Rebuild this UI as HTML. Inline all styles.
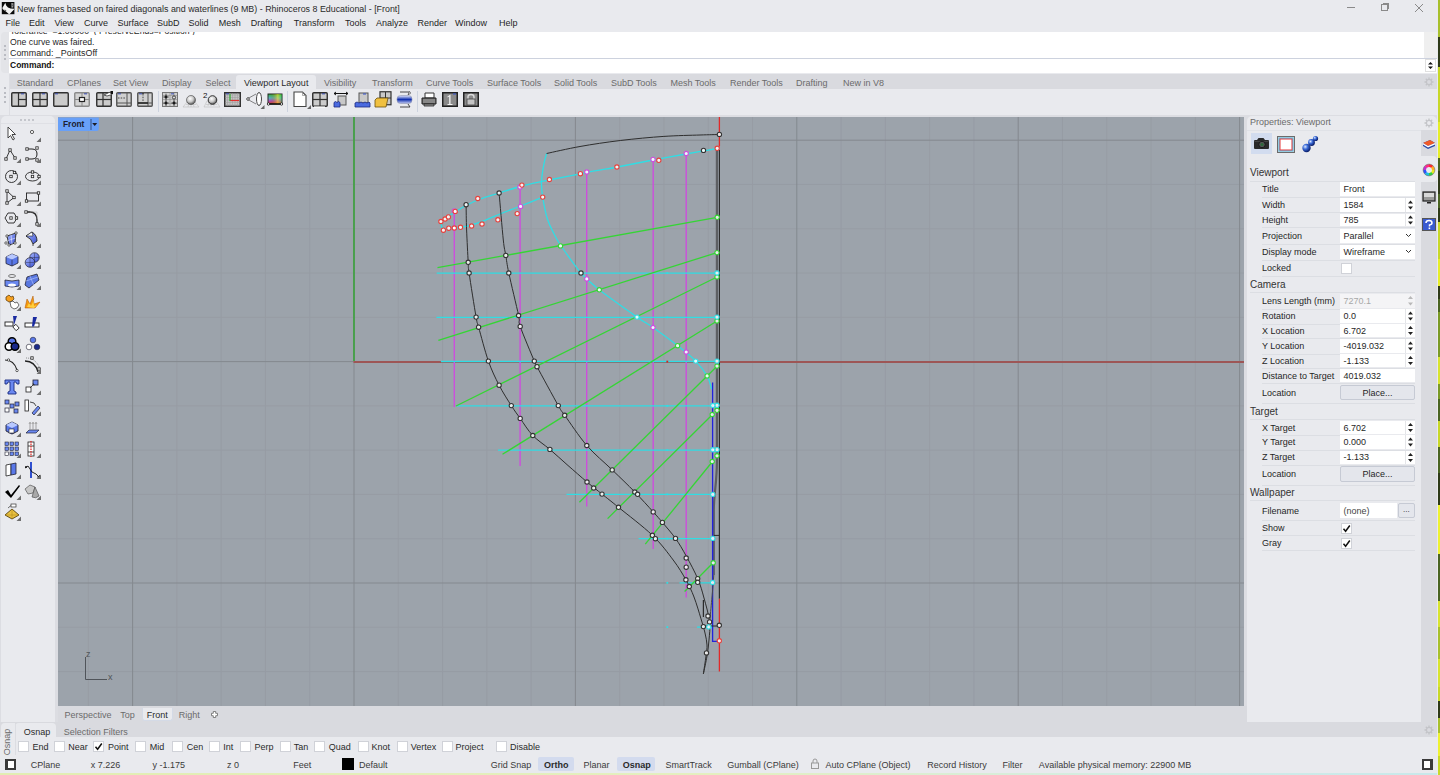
<!DOCTYPE html>
<html><head><meta charset="utf-8">
<style>
*{margin:0;padding:0;box-sizing:border-box}
html,body{width:1440px;height:775px;overflow:hidden;background:#e9eaee;font-family:"Liberation Sans",sans-serif;color:#222}
.a{position:absolute;white-space:nowrap}
.t{font-size:9px;line-height:10px;color:#1f1f1f}
.g{color:#6b6b6b}
svg.a{overflow:visible}
</style></head><body>
<div class="a" style="left:1437.5px;top:0;width:2.5px;height:775px;background:linear-gradient(#a8c02c 0.0%,#a8c02c 4.8%,#2e3a18 4.8%,#2e3a18 8.6%,#c8d828 8.6%,#c8d828 13.0%,#c8d828 13.0%,#c8d828 15.8%,#e6ee2a 15.8%,#e6ee2a 20.4%,#4a6422 20.4%,#4a6422 22.1%,#2e3a18 22.1%,#2e3a18 25.0%,#4a6422 25.0%,#4a6422 26.8%,#2e3a18 26.8%,#2e3a18 28.6%,#c8d828 28.6%,#c8d828 33.4%,#e6ee2a 33.4%,#e6ee2a 36.9%,#2e3a18 36.9%,#2e3a18 38.6%,#4a6422 38.6%,#4a6422 40.2%,#7a9a26 40.2%,#7a9a26 42.7%,#7a9a26 42.7%,#7a9a26 46.1%,#d8e430 46.1%,#d8e430 49.6%,#7a9a26 49.6%,#7a9a26 51.5%,#4a6422 51.5%,#4a6422 54.3%,#c8d828 54.3%,#c8d828 57.7%,#4a6422 57.7%,#4a6422 61.0%,#2e3a18 61.0%,#2e3a18 65.2%,#eef232 65.2%,#eef232 68.7%,#eef232 68.7%,#eef232 71.5%,#4a6422 71.5%,#4a6422 75.8%,#4a6422 75.8%,#4a6422 77.6%,#d8e430 77.6%,#d8e430 80.9%,#a8c02c 80.9%,#a8c02c 85.0%,#d8e430 85.0%,#d8e430 88.6%,#c8d828 88.6%,#c8d828 90.5%,#2e3a18 90.5%,#2e3a18 92.6%,#a8c02c 92.6%,#a8c02c 94.6%,#eef232 94.6%,#eef232 97.6%,#c8d828 97.6%,#c8d828 101.8%)"></div>
<div class="a" style="left:0;top:773px;width:1437px;height:2px;background:linear-gradient(90deg,#e2edb2,#e4efc0 50%,#d2ece6 80%,#c8e8ea)"></div>

<!-- title bar -->
<svg class="a" style="left:1px;top:2px" width="14" height="13" viewBox="0 0 14 13"><rect x="0.8" y="0" width="12.6" height="12.2" fill="#0a0a0a"/><path d="M1.5 5.5L2.5 4L4.3 0.8L5.2 3.5L7 5.5L9.5 6.5L13 6.8L13 7.5L9 11.8L8 12.2L5.5 10L3.5 8.5L1.5 7Z" fill="#f2f2f2"/><path d="M3.5 7.5L5.5 8.2L4.2 9.3Z" fill="#555"/><path d="M10.3 1L12.5 1.2L12.3 5.5L10.5 5.8Z" fill="#9a9a9a"/><path d="M10.8 3.3H12" stroke="#222" stroke-width="0.6"/></svg>
<div class="a t" style="left:17px;top:3.8px;color:#2a2a2a;font-size:8.88px">New frames based on faired diagonals and waterlines (9 MB) - Rhinoceros 8 Educational - [Front]</div>
<div class="a" style="left:1347px;top:7px;width:8px;height:1px;background:#8a8a8a"></div>
<div class="a" style="left:1381px;top:4px;width:7px;height:7px;border:1px solid #8a8a8a"></div>
<div class="a" style="left:1383px;top:3px;width:6px;height:6px;border-top:1px solid #8a8a8a;border-right:1px solid #8a8a8a"></div>
<svg class="a" style="left:1415px;top:4px" width="8" height="8"><path d="M0 0L8 8M8 0L0 8" stroke="#8a8a8a" stroke-width="1"/></svg>

<!-- menu -->
<div class="a t" style="left:0;top:18.1px;color:#1f1f1f">
<span class="a" style="left:5.5px">File</span><span class="a" style="left:29px">Edit</span><span class="a" style="left:54.5px">View</span><span class="a" style="left:84px">Curve</span><span class="a" style="left:117.5px">Surface</span><span class="a" style="left:157px">SubD</span><span class="a" style="left:188.5px">Solid</span><span class="a" style="left:218.75px">Mesh</span><span class="a" style="left:250.75px">Drafting</span><span class="a" style="left:293.75px">Transform</span><span class="a" style="left:345px">Tools</span><span class="a" style="left:376px">Analyze</span><span class="a" style="left:417.5px">Render</span><span class="a" style="left:455px">Window</span><span class="a" style="left:499px">Help</span>
</div>

<!-- command area -->
<div class="a" style="left:1px;top:32px;width:9px;height:41px;background:#e3e4e8;border-radius:4px 0 0 4px"></div>
<div class="a" style="left:4px;top:45px;width:2px;height:16px;background:repeating-linear-gradient(#b9bbc2 0 2px,transparent 2px 4.5px)"></div>
<div class="a" style="left:9px;top:32px;width:1415px;height:41px;background:#fff"></div>
<div class="a" style="left:1424px;top:32px;width:13px;height:26px;background:#efefef"></div>
<div class="a" style="left:1424px;top:58px;width:13px;height:15px;background:#fff"></div>
<div class="a" style="left:9px;top:58px;width:1428px;height:1px;background:#cdd2de"></div>
<div class="a" style="left:9px;top:32px;width:600px;height:3px;overflow:hidden"><div class="a t" style="left:1px;top:-5.9px;white-space:pre;font-size:8.7px">Tolerance  =1.00000  ( PreserveEnds=Position )</div></div>
<div class="a t" style="left:10px;top:36.7px;font-size:8.7px">One curve was faired.</div>
<div class="a t" style="left:10px;top:48px;font-size:8.9px">Command: _PointsOff</div>
<div class="a t" style="left:10px;top:59.8px;font-weight:bold;color:#111;font-size:8.5px">Command:</div>
<svg class="a" style="left:1425px;top:59px" width="11" height="13"><rect x="0.5" y="0.5" width="10" height="12" fill="#fff" stroke="#e0e0e0"/><path d="M3 5.5 L5.5 3 L8 5.5Z M3 7.5 L5.5 10 L8 7.5Z" fill="#111"/></svg>

<!-- toolbar area -->
<div class="a" style="left:1px;top:74px;width:1436px;height:42px;background:#e9eaee;border-radius:4px"></div>
<div class="a" style="left:9px;top:74px;width:1428px;height:15px;background:#d9dadf"></div>
<div class="a" style="left:236px;top:75px;width:80px;height:14px;background:#e9eaee;border-radius:3px 3px 0 0"></div>
<div class="a" style="left:4px;top:87px;width:2px;height:16px;background:repeating-linear-gradient(#b9bbc2 0 2px,transparent 2px 4.5px)"></div>
<div class="a" style="left:9px;top:74px;width:1px;height:42px;background:#dcdde2"></div>
<div class="a t g" style="left:0;top:77.9px">
<span class="a" style="left:16.75px">Standard</span><span class="a" style="left:67px">CPlanes</span><span class="a" style="left:113px">Set View</span><span class="a" style="left:162px">Display</span><span class="a" style="left:205.5px">Select</span><span class="a" style="left:244px;color:#2a2a2a">Viewport Layout</span><span class="a" style="left:324px">Visibility</span><span class="a" style="left:372px">Transform</span><span class="a" style="left:426px">Curve Tools</span><span class="a" style="left:487px">Surface Tools</span><span class="a" style="left:554px">Solid Tools</span><span class="a" style="left:611px">SubD Tools</span><span class="a" style="left:670.5px">Mesh Tools</span><span class="a" style="left:730px">Render Tools</span><span class="a" style="left:796px">Drafting</span><span class="a" style="left:843px">New in V8</span>
</div>
<svg class="a" style="left:1424px;top:77px" width="10" height="10" viewBox="0 0 10 10"><g fill="none" stroke="#c3c4c8" stroke-width="1.3"><circle cx="5" cy="5" r="2.6"/><path d="M5 0.5V2M5 8V9.5M0.5 5H2M8 5H9.5M1.8 1.8L2.9 2.9M7.1 7.1L8.2 8.2M1.8 8.2L2.9 7.1M7.1 2.9L8.2 1.8"/></g></svg>
<svg class="a" style="left:11px;top:92px" width="16" height="15" viewBox="0 0 16 15"><rect x="0.75" y="0.75" width="14.5" height="13.5" rx="1" fill="#cbcbcb" stroke="#303030" stroke-width="1.4"/><path d="M7.5 1V14" stroke="#303030" stroke-width="1.2" fill="none"/><path d="M7.5 7.5H15" stroke="#303030" stroke-width="1.2" fill="none"/><rect x="10" y="1.4" width="3" height="0.9" fill="#2a3fb0"/></svg>
<svg class="a" style="left:32px;top:92px" width="16" height="15" viewBox="0 0 16 15"><rect x="0.75" y="0.75" width="14.5" height="13.5" rx="1" fill="#cbcbcb" stroke="#303030" stroke-width="1.4"/><path d="M8 1V14" stroke="#303030" stroke-width="1.2" fill="none"/><path d="M1 7.5H15" stroke="#303030" stroke-width="1.2" fill="none"/><rect x="10" y="1.4" width="3" height="0.9" fill="#2a3fb0"/></svg>
<svg class="a" style="left:53px;top:92px" width="16" height="15" viewBox="0 0 16 15"><rect x="0.75" y="0.75" width="14.5" height="13.5" rx="1" fill="#cbcbcb" stroke="#303030" stroke-width="1.4"/><rect x="2" y="1.4" width="3" height="0.9" fill="#2a3fb0"/></svg>
<svg class="a" style="left:74px;top:92px" width="16" height="15" viewBox="0 0 16 15"><rect x="0.75" y="0.75" width="14.5" height="13.5" rx="1" fill="#d4d4d4" stroke="#8a8a8a" stroke-width="1.4"/><path d="M8 1V14" stroke="#8a8a8a" stroke-width="1" fill="none"/><path d="M1 7.5H15" stroke="#8a8a8a" stroke-width="1" fill="none"/><rect x="5.5" y="5.5" width="5" height="4" fill="#fff" stroke="#222" stroke-width="1.2"/><rect x="10" y="1.4" width="3" height="0.9" fill="#2a3fb0"/></svg>
<svg class="a" style="left:96px;top:91px" width="17" height="16" viewBox="0 0 17 16"><g transform="translate(0,1)"><rect x="0.75" y="0.75" width="14.5" height="13.5" rx="1" fill="#cbcbcb" stroke="#303030" stroke-width="1.4"/><path d="M7 1V14" stroke="#303030" stroke-width="1.2" fill="none"/><path d="M1 7.5H15" stroke="#303030" stroke-width="1.2" fill="none"/></g><path d="M8 4L13 1.5L16 1V3.5L11 5Z" fill="#fff" stroke="#333" stroke-width="0.8"/><rect x="14.5" y="0" width="2.5" height="3" fill="#111"/></svg>
<svg class="a" style="left:116px;top:92px" width="16" height="15" viewBox="0 0 16 15"><rect x="0.75" y="0.75" width="14.5" height="13.5" rx="1" fill="#d0d0d0" stroke="#555" stroke-width="1.4"/><path d="M11 1V14" stroke="#555" stroke-width="1" fill="none"/><path d="M1 11H15" stroke="#555" stroke-width="1" fill="none"/><path d="M2 6H10" stroke="#444" stroke-width="1" stroke-dasharray="1.5 1.2"/><rect x="2" y="1.4" width="3" height="0.9" fill="#2a3fb0"/></svg>
<svg class="a" style="left:137px;top:92px" width="16" height="15" viewBox="0 0 16 15"><rect x="0.75" y="0.75" width="14.5" height="13.5" rx="1" fill="#d0d0d0" stroke="#555" stroke-width="1.4"/><path d="M11 1V14" stroke="#555" stroke-width="1" fill="none"/><path d="M1 11H15" stroke="#555" stroke-width="1" fill="none"/><path d="M6 2V10" stroke="#444" stroke-width="1" stroke-dasharray="1.5 1.2"/><path d="M1 11H11M6 1V2" stroke="#222" stroke-width="1.3"/><rect x="2" y="1.4" width="3" height="0.9" fill="#2a3fb0"/></svg>
<svg class="a" style="left:162px;top:92px" width="16" height="15" viewBox="0 0 16 15"><rect x="0.5" y="0.5" width="15" height="14" fill="#cfcfcf" stroke="#777" stroke-width="1"/><path d="M4 1V14M1 3.5H15" stroke="#888" stroke-width="0.6"/><path d="M8 1V14M1 7.5H15" stroke="#888" stroke-width="0.6"/><path d="M12 1V14M1 11.5H15" stroke="#888" stroke-width="0.6"/><path d="M1.5 5H6.5M4 2.5V7.5M9.5 11H14.5M12 8.5V13.5M1.5 11H6.5M4 8.5V13.5" stroke="#111" stroke-width="1"/><circle cx="4" cy="5" r="1" fill="#111"/><circle cx="12" cy="11" r="1" fill="#111"/><circle cx="4" cy="11" r="1" fill="#111"/><circle cx="12" cy="5.5" r="1.6" fill="#ddd" stroke="#222" stroke-width="0.8"/><rect x="9" y="1.4" width="3" height="0.9" fill="#2a3fb0"/></svg>
<svg class="a" style="left:183px;top:92px" width="16" height="15" viewBox="0 0 16 15"><defs><radialGradient id="gs" cx="40%" cy="35%" r="60%"><stop offset="0" stop-color="#fff"/><stop offset="0.6" stop-color="#c8c8c8"/><stop offset="1" stop-color="#6a6a6a"/></radialGradient></defs><path d="M0 15L4 10H12L16 15ZM3 12.5H13M6 10L5 15M10 10L11 15M8 10V15" fill="none" stroke="#bdbdbd" stroke-width="0.6"/><circle cx="8" cy="8" r="4.5" fill="url(#gs)" stroke="#444" stroke-width="0.6"/></svg>
<svg class="a" style="left:203px;top:91px" width="17" height="16" viewBox="0 0 17 16"><path d="M1 16L4 10H13L17 16ZM3 13.5H14M6 10L5 15M10 10L11 15M8 10V15" fill="none" stroke="#bdbdbd" stroke-width="0.6"/><circle cx="9.5" cy="9" r="4.3" fill="url(#gs)" stroke="#222" stroke-width="0.9"/><text x="0" y="6.5" font-size="8" font-family="Liberation Sans" fill="#111">2</text></svg>
<svg class="a" style="left:224px;top:92px" width="17" height="15" viewBox="0 0 17 15"><rect x="0.75" y="0.75" width="15.5" height="13.5" fill="#c4c4c4" stroke="#333" stroke-width="1.5"/><path d="M3.5 1V14M1 3.0H16" stroke="#9a9a9a" stroke-width="0.5"/><path d="M6 1V14M1 5.5H16" stroke="#9a9a9a" stroke-width="0.5"/><path d="M8.5 1V14M1 8.0H16" stroke="#9a9a9a" stroke-width="0.5"/><path d="M11 1V14M1 10.5H16" stroke="#9a9a9a" stroke-width="0.5"/><path d="M13.5 1V14M1 13.0H16" stroke="#9a9a9a" stroke-width="0.5"/><path d="M6 2V8.5H15" fill="none" stroke="#30b030" stroke-width="1.2"/><path d="M6.5 8.5H15" stroke="#e03030" stroke-width="1.2"/><rect x="2" y="1.4" width="3" height="0.9" fill="#2a3fb0"/></svg>
<svg class="a" style="left:245px;top:91px" width="20" height="18" viewBox="0 0 20 18"><path d="M2 8L11 3M2 8L11 13" stroke="#555" stroke-width="0.7"/><circle cx="3" cy="8" r="1.3" fill="#fff" stroke="#222" stroke-width="0.8"/><ellipse cx="14" cy="8" rx="2.5" ry="6.5" fill="#fff" stroke="#333" stroke-width="0.9"/><path d="M15.5 18L19.5 14V18Z" fill="#666"/></svg>
<svg class="a" style="left:267px;top:92px" width="16" height="15" viewBox="0 0 16 15"><defs><linearGradient id="cg1" x1="0" y1="0" x2="0" y2="1"><stop offset="0" stop-color="#30c040"/><stop offset="0.4" stop-color="#60c0d0"/><stop offset="0.7" stop-color="#c050d0"/><stop offset="1" stop-color="#f04020"/></linearGradient><linearGradient id="cg2" x1="0" y1="0" x2="1" y2="0"><stop offset="0" stop-color="#000" stop-opacity="0"/><stop offset="0.7" stop-color="#ffe020" stop-opacity="0.6"/><stop offset="1" stop-color="#20c040" stop-opacity="0.4"/></linearGradient></defs><rect x="1" y="2" width="14" height="10" fill="url(#cg1)" stroke="#222" stroke-width="1"/><rect x="1" y="2" width="14" height="10" fill="url(#cg2)"/><path d="M1 12H15" stroke="#111" stroke-width="1.5"/><circle cx="1.5" cy="12" r="1.2" fill="#fff" stroke="#111" stroke-width="0.8"/><circle cx="14.5" cy="12" r="1.2" fill="#fff" stroke="#111" stroke-width="0.8"/></svg>
<svg class="a" style="left:293px;top:91px" width="18" height="18" viewBox="0 0 18 18"><path d="M1 1H9.5L13 4.5V15.5H1Z" fill="#fff" stroke="#444" stroke-width="1.1"/><path d="M9.5 1V4.5H13" fill="none" stroke="#888" stroke-width="0.7"/><path d="M14 18L18 14V18Z" fill="#666"/></svg>
<svg class="a" style="left:312px;top:92px" width="16" height="16" viewBox="0 0 16 16"><rect x="0.75" y="0.75" width="14.5" height="13.5" rx="1" fill="#cbcbcb" stroke="#303030" stroke-width="1.4"/><path d="M8 1V14" stroke="#303030" stroke-width="1.2" fill="none"/><path d="M1 7.5H15" stroke="#303030" stroke-width="1.2" fill="none"/><path d="M2 15H13" stroke="#fff" stroke-width="1.2"/><rect x="10" y="1.4" width="3" height="0.9" fill="#2a3fb0"/></svg>
<svg class="a" style="left:333px;top:91px" width="16" height="17" viewBox="0 0 16 17"><path d="M1 2.5H15M1 2.5L3 1M1 2.5L3 4M15 2.5L13 1M15 2.5L13 4" stroke="#111" stroke-width="1"/><rect x="5" y="5" width="8" height="9" fill="#c8c8c8" stroke="#555" stroke-width="1"/><path d="M1 11.5L2.5 10.5L4 11.5L5.5 10.5L7 11.5V16H1Z" fill="#4a6ae0" stroke="#1a2a80" stroke-width="0.8"/></svg>
<svg class="a" style="left:354px;top:92px" width="17" height="16" viewBox="0 0 17 16"><rect x="5" y="1" width="9" height="10" fill="#c8c8c8" stroke="#555" stroke-width="1"/><rect x="9" y="1.5" width="3" height="1" fill="#3050d0"/><path d="M1 11L3 10L5 11L7 10L9 11L11 10L13 11L15 10L16 11V15H1Z" fill="#4a6ae0" stroke="#1a2a80" stroke-width="0.8"/></svg>
<svg class="a" style="left:374px;top:91px" width="19" height="17" viewBox="0 0 19 17"><rect x="6" y="0.75" width="11" height="13" fill="#c8c8c8" stroke="#333" stroke-width="1.2"/><path d="M11.5 1V14M6 7H17" stroke="#333" stroke-width="1"/><path d="M1 9L3 7H14L12 16H1Z" fill="#f0c040" stroke="#6a5010" stroke-width="0.8"/></svg>
<svg class="a" style="left:396px;top:91px" width="17" height="17" viewBox="0 0 17 17"><defs><linearGradient id="cyl" x1="0" y1="0" x2="0" y2="1"><stop offset="0" stop-color="#e8ecff"/><stop offset="0.5" stop-color="#1030b0"/><stop offset="1" stop-color="#c0c8f0"/></linearGradient></defs><path d="M4 1H14L12 4M4 16H14L12 13" fill="none" stroke="#333" stroke-width="0.9"/><rect x="1" y="4.5" width="15" height="8" rx="3.5" fill="url(#cyl)" stroke="#8a90b0" stroke-width="0.6"/><circle cx="13.5" cy="2" r="1" fill="#fff" stroke="#333" stroke-width="0.6"/></svg>
<svg class="a" style="left:421px;top:92px" width="16" height="15" viewBox="0 0 16 15"><path d="M4 1H13V6H4Z" fill="#fff" stroke="#333" stroke-width="1"/><path d="M1 6H15V12H1Z" fill="#666" stroke="#222" stroke-width="1"/><path d="M2 8H14M2 10H14" stroke="#bbb" stroke-width="0.8"/><path d="M3 12H13V14H3Z" fill="#999" stroke="#222" stroke-width="0.8"/></svg>
<svg class="a" style="left:442px;top:92px" width="16" height="15" viewBox="0 0 16 15"><rect x="0.75" y="0.75" width="14.5" height="13.5" fill="#8a8a8a" stroke="#222" stroke-width="1.5"/><path d="M5.5 4.5L8.5 2.5V12H10.5V13H5.5V12H7.2V4.5L5.5 5.5Z" fill="#f4f4f4"/><rect x="11" y="1.5" width="3" height="1" fill="#3050d0"/></svg>
<svg class="a" style="left:463px;top:92px" width="16" height="15" viewBox="0 0 16 15"><rect x="0.75" y="0.75" width="14.5" height="13.5" fill="#8a8a8a" stroke="#222" stroke-width="1.5"/><path d="M5 7V5Q5 2.5 8 2.5Q11 2.5 11 5V7" fill="none" stroke="#ddd" stroke-width="1.4"/><rect x="4" y="7" width="8" height="6" fill="#c4c4c4" stroke="#444" stroke-width="0.8"/></svg>
<div class="a" style="left:158px;top:91px;width:1px;height:21px;background:#cdd3df"></div>
<div class="a" style="left:287px;top:91px;width:1px;height:21px;background:#cdd3df"></div>
<div class="a" style="left:417px;top:91px;width:1px;height:21px;background:#cdd3df"></div>

<!-- left toolbar -->
<div class="a" style="left:0;top:115px;width:1437px;height:622px;background:#dcdde2"></div>
<div class="a" style="left:1px;top:116px;width:54px;height:606px;background:#e9eaee;border-radius:5px 5px 0 0"></div><div class="a" style="left:1px;top:123px;width:54px;height:1px;background:#dfe0e5"></div>
<div class="a" style="left:20px;top:119px;width:16px;height:2px;background:repeating-linear-gradient(90deg,#c4c6cc 0 2px,transparent 2px 4px)"></div>
<svg width="0" height="0" style="position:absolute"><defs><linearGradient id="bf" x1="0" y1="0" x2="1" y2="1"><stop offset="0" stop-color="#a8b8ff"/><stop offset="1" stop-color="#3a50d0"/></linearGradient></defs></svg>
<svg class="a" style="left:4px;top:125px" width="17" height="17" viewBox="0 0 17 17"><path d="M4 2V13L6.5 10.5L9 15L10.5 14L8 9.5H11.5Z" fill="#fff" stroke="#333" stroke-width="0.9"/></svg>
<svg class="a" style="left:24px;top:125px" width="17" height="17" viewBox="0 0 17 17"><circle cx="8" cy="7" r="1.6" fill="#fff" stroke="#333" stroke-width="0.8"/><path d="M12.5 17L17 12.5V17Z" fill="#6e6e6e"/></svg>
<svg class="a" style="left:4px;top:146px" width="17" height="17" viewBox="0 0 17 17"><path d="M2 13L6 4L11 12" fill="none" stroke="#222" stroke-width="0.9"/><rect x="0.8" y="11.8" width="2.4" height="2.4" fill="#fff" stroke="#222" stroke-width="0.8"/><rect x="4.8" y="2.8" width="2.4" height="2.4" fill="#fff" stroke="#222" stroke-width="0.8"/><rect x="9.8" y="10.8" width="2.4" height="2.4" fill="#fff" stroke="#222" stroke-width="0.8"/><path d="M12.5 17L17 12.5V17Z" fill="#6e6e6e"/></svg>
<svg class="a" style="left:24px;top:146px" width="17" height="17" viewBox="0 0 17 17"><path d="M3 3H8Q13 3 13 8Q13 13 8 13H3" fill="none" stroke="#222" stroke-width="1"/><rect x="1.8" y="1.8" width="2.4" height="2.4" fill="#fff" stroke="#222" stroke-width="0.8"/><rect x="1.8" y="11.8" width="2.4" height="2.4" fill="#fff" stroke="#222" stroke-width="0.8"/><rect x="11.8" y="0.8" width="2.4" height="2.4" fill="#fff" stroke="#222" stroke-width="0.8"/><rect x="11.8" y="12.8" width="2.4" height="2.4" fill="#fff" stroke="#222" stroke-width="0.8"/><path d="M12.5 17L17 12.5V17Z" fill="#6e6e6e"/></svg>
<svg class="a" style="left:4px;top:168px" width="17" height="17" viewBox="0 0 17 17"><circle cx="7.5" cy="8.5" r="6" fill="none" stroke="#222" stroke-width="0.9"/><rect x="5.8" y="7.3" width="2.4" height="2.4" fill="#fff" stroke="#222" stroke-width="0.8"/><rect x="9.3" y="3.3" width="2.4" height="2.4" fill="#fff" stroke="#222" stroke-width="0.8"/><path d="M12.5 17L17 12.5V17Z" fill="#6e6e6e"/></svg>
<svg class="a" style="left:24px;top:168px" width="17" height="17" viewBox="0 0 17 17"><ellipse cx="8.5" cy="8.5" rx="7" ry="4.5" fill="none" stroke="#222" stroke-width="0.9"/><rect x="7.3" y="7.3" width="2.4" height="2.4" fill="#fff" stroke="#222" stroke-width="0.8"/><rect x="7.3" y="2.8" width="2.4" height="2.4" fill="#fff" stroke="#222" stroke-width="0.8"/><rect x="13.8" y="7.3" width="2.4" height="2.4" fill="#fff" stroke="#222" stroke-width="0.8"/><path d="M12.5 17L17 12.5V17Z" fill="#6e6e6e"/></svg>
<svg class="a" style="left:4px;top:189px" width="17" height="17" viewBox="0 0 17 17"><path d="M3 2L10 8.5L3 14Z" fill="none" stroke="#222" stroke-width="0.9"/><rect x="1.8" y="0.8" width="2.4" height="2.4" fill="#fff" stroke="#222" stroke-width="0.8"/><rect x="8.8" y="7.3" width="2.4" height="2.4" fill="#fff" stroke="#222" stroke-width="0.8"/><rect x="1.8" y="12.8" width="2.4" height="2.4" fill="#fff" stroke="#222" stroke-width="0.8"/><path d="M12.5 17L17 12.5V17Z" fill="#6e6e6e"/></svg>
<svg class="a" style="left:24px;top:189px" width="17" height="17" viewBox="0 0 17 17"><rect x="2.5" y="4" width="12" height="8" fill="none" stroke="#222" stroke-width="0.9"/><rect x="1.3" y="10.8" width="2.4" height="2.4" fill="#fff" stroke="#222" stroke-width="0.8"/><rect x="13.3" y="2.8" width="2.4" height="2.4" fill="#fff" stroke="#222" stroke-width="0.8"/><path d="M12.5 17L17 12.5V17Z" fill="#6e6e6e"/></svg>
<svg class="a" style="left:4px;top:210px" width="17" height="17" viewBox="0 0 17 17"><path d="M4 3H10L13 8L10 13H4L1 8Z" fill="none" stroke="#222" stroke-width="0.9"/><rect x="5.8" y="6.8" width="2.4" height="2.4" fill="#fff" stroke="#222" stroke-width="0.8"/><rect x="11.3" y="6.8" width="2.4" height="2.4" fill="#fff" stroke="#222" stroke-width="0.8"/><path d="M12.5 17L17 12.5V17Z" fill="#6e6e6e"/></svg>
<svg class="a" style="left:24px;top:210px" width="17" height="17" viewBox="0 0 17 17"><path d="M2 2H6Q13 2 13 10V14" fill="none" stroke="#222" stroke-width="1.3"/><path d="M6 2H13V9" fill="none" stroke="#aaa" stroke-width="0.5"/><rect x="0.8" y="0.8" width="2.4" height="2.4" fill="#fff" stroke="#222" stroke-width="0.8"/><rect x="11.8" y="12.8" width="2.4" height="2.4" fill="#fff" stroke="#222" stroke-width="0.8"/><path d="M12.5 17L17 12.5V17Z" fill="#6e6e6e"/></svg>
<svg class="a" style="left:4px;top:231px" width="17" height="17" viewBox="0 0 17 17"><path d="M3 5L12 2L11 12L5 14Z" fill="url(#bf)" stroke="#222" stroke-width="0.9"/><path d="M7 3.5L8 13M4 9.5L11.5 7" stroke="#eef" stroke-width="0.6"/><circle cx="3" cy="5" r="1.2" fill="#fff" stroke="#222" stroke-width="0.7"/><circle cx="12" cy="2" r="1.2" fill="#fff" stroke="#222" stroke-width="0.7"/><circle cx="11" cy="12" r="1.2" fill="#fff" stroke="#222" stroke-width="0.7"/><circle cx="5" cy="14" r="1.2" fill="#fff" stroke="#222" stroke-width="0.7"/><circle cx="2" cy="12" r="1.2" fill="#fff" stroke="#222" stroke-width="0.7"/><path d="M12.5 17L17 12.5V17Z" fill="#6e6e6e"/></svg>
<svg class="a" style="left:24px;top:231px" width="17" height="17" viewBox="0 0 17 17"><path d="M2 5L8 1Q13 4 13 10L9 13Q8 8 2 5Z" fill="url(#bf)" stroke="#222" stroke-width="0.9"/><path d="M2 5L8 1L9 5Z" fill="#fff" stroke="#222" stroke-width="0.6"/><path d="M9 13L9 15" stroke="#222" stroke-width="0.8"/><path d="M12.5 17L17 12.5V17Z" fill="#6e6e6e"/></svg>
<svg class="a" style="left:4px;top:252px" width="17" height="17" viewBox="0 0 17 17"><path d="M2 5L8 2L14 4.5V11L8 14L2 11.5Z" fill="#5a78e8" stroke="#223" stroke-width="0.8"/><path d="M2 5L8 7.5L14 4.5L8 2Z" fill="#b8c8ff"/><path d="M8 7.5V14" stroke="#223" stroke-width="0.6"/><path d="M12.5 17L17 12.5V17Z" fill="#6e6e6e"/></svg>
<svg class="a" style="left:24px;top:252px" width="17" height="17" viewBox="0 0 17 17"><circle cx="10.5" cy="5.5" r="4.8" fill="url(#bf)" stroke="#223" stroke-width="0.7"/><circle cx="6" cy="10.5" r="4.8" fill="url(#bf)" stroke="#223" stroke-width="0.7"/><path d="M6 6V15M1.5 10.5H10.5M10.5 1V10M6 5.5H15" stroke="#223" stroke-width="0.4"/><path d="M12.5 17L17 12.5V17Z" fill="#6e6e6e"/></svg>
<svg class="a" style="left:4px;top:273px" width="17" height="17" viewBox="0 0 17 17"><ellipse cx="8" cy="3" rx="3.5" ry="1.5" fill="none" stroke="#555" stroke-width="0.8"/><path d="M1 7Q8 9 15 7V13Q8 15 1 13Z" fill="#6a88f0" stroke="#223" stroke-width="0.8"/><ellipse cx="8" cy="12" rx="4" ry="1.6" fill="#fff"/><path d="M12.5 17L17 12.5V17Z" fill="#6e6e6e"/></svg>
<svg class="a" style="left:24px;top:273px" width="17" height="17" viewBox="0 0 17 17"><path d="M3 4L13 1L15 7L5 15L1 12Z" fill="#5a78e0" stroke="#223" stroke-width="0.8"/><path d="M6 3L10 13M2 8L14 4" stroke="#b8c8ff" stroke-width="0.6"/><path d="M12.5 17L17 12.5V17Z" fill="#6e6e6e"/></svg>
<svg class="a" style="left:4px;top:294px" width="17" height="17" viewBox="0 0 17 17"><path d="M2 3L5 1L7 3L9 2L10 5L8 7L5 8L2 6Z" fill="#f5a020" stroke="#553000" stroke-width="0.7"/><path d="M6 8L9 7L11 9L13 8L15 11L13 14L10 15L7 13Z" fill="#fff" stroke="#333" stroke-width="0.7"/><path d="M12.5 17L17 12.5V17Z" fill="#6e6e6e"/></svg>
<svg class="a" style="left:24px;top:294px" width="17" height="17" viewBox="0 0 17 17"><path d="M1 14L3 5L6 10L9 2L10 10L16 8L11 14Z" fill="#f59a10" stroke="#aa5000" stroke-width="0.5"/><path d="M3 13L5 9L7 12L9.5 7L10 12L13 11L10 14Z" fill="#ffd040"/></svg>
<svg class="a" style="left:4px;top:315px" width="17" height="17" viewBox="0 0 17 17"><rect x="1" y="7" width="8" height="4" fill="#fff" stroke="#222" stroke-width="0.9"/><path d="M9 1H13L10 10Z" fill="#1a2aa0"/><rect x="10" y="10" width="4" height="5" transform="rotate(-40 12 12.5)" fill="#fff" stroke="#222" stroke-width="0.8"/></svg>
<svg class="a" style="left:24px;top:315px" width="17" height="17" viewBox="0 0 17 17"><rect x="1" y="8" width="14" height="4" fill="#fff" stroke="#222" stroke-width="0.9"/><path d="M9 2H13L10 11.5H8Z" fill="#1a2aa0"/></svg>
<svg class="a" style="left:4px;top:336px" width="17" height="17" viewBox="0 0 17 17"><circle cx="8" cy="5.5" r="3.8" fill="#5a78e8" stroke="#000" stroke-width="1.5"/><circle cx="5" cy="10.5" r="3.8" fill="#fff" stroke="#000" stroke-width="1.5"/><circle cx="11" cy="10.5" r="3.8" fill="#1a2a8a" stroke="#000" stroke-width="1.5"/><path d="M12.5 17L17 12.5V17Z" fill="#6e6e6e"/></svg>
<svg class="a" style="left:24px;top:336px" width="17" height="17" viewBox="0 0 17 17"><circle cx="9" cy="4" r="2.8" fill="#5a78e8" stroke="#223" stroke-width="0.6"/><circle cx="5" cy="11" r="2.8" fill="#fff" stroke="#223" stroke-width="0.6"/><circle cx="13" cy="11" r="2.8" fill="#1a2a8a" stroke="#223" stroke-width="0.6"/></svg>
<svg class="a" style="left:4px;top:357px" width="17" height="17" viewBox="0 0 17 17"><path d="M1 3Q10 3 13 13" fill="none" stroke="#222" stroke-width="1.1"/><circle cx="4.5" cy="3" r="1.2" fill="#fff" stroke="#222" stroke-width="0.7"/><circle cx="13" cy="13.5" r="1.2" fill="#fff" stroke="#222" stroke-width="0.7"/></svg>
<svg class="a" style="left:24px;top:357px" width="17" height="17" viewBox="0 0 17 17"><path d="M1 4Q11 4 14 15" fill="none" stroke="#222" stroke-width="1.3"/><path d="M2 1Q12 1 16 12" fill="none" stroke="#444" stroke-width="0.6" stroke-dasharray="1 1"/><rect x="6.8" y="-0.19999999999999996" width="2.4" height="2.4" fill="#fff" stroke="#222" stroke-width="0.8"/><rect x="13.8" y="10.8" width="2.4" height="2.4" fill="#fff" stroke="#222" stroke-width="0.8"/><path d="M12.5 17L17 12.5V17Z" fill="#6e6e6e"/></svg>
<svg class="a" style="left:4px;top:378px" width="17" height="17" viewBox="0 0 17 17"><path d="M1 2H15V6H13L12 4H10V13L12 14V16H4V14L6 13V4H4L3 6H1Z" fill="#6a88f0" stroke="#1a2a80" stroke-width="0.9"/></svg>
<svg class="a" style="left:24px;top:378px" width="17" height="17" viewBox="0 0 17 17"><rect x="2" y="9" width="5" height="5" fill="#fff" stroke="#222" stroke-width="0.8"/><rect x="9" y="2" width="5" height="5" fill="#6a88f0" stroke="#223" stroke-width="0.8"/><path d="M6 10L10 6" stroke="#222" stroke-width="0.8"/><path d="M8.5 6L10 6L10 7.5" fill="none" stroke="#222" stroke-width="0.7"/><path d="M12.5 17L17 12.5V17Z" fill="#6e6e6e"/></svg>
<svg class="a" style="left:4px;top:399px" width="17" height="17" viewBox="0 0 17 17"><rect x="1" y="1" width="4" height="4" fill="#6a88f0" stroke="#223" stroke-width="0.7"/><rect x="6" y="5" width="4" height="4" fill="#6a88f0" stroke="#223" stroke-width="0.7"/><rect x="11" y="3" width="4" height="4" fill="#6a88f0" stroke="#223" stroke-width="0.7"/><rect x="1" y="9" width="4" height="4" fill="#fff" stroke="#223" stroke-width="0.7"/><rect x="10" y="10" width="4" height="4" fill="#6a88f0" stroke="#223" stroke-width="0.7"/></svg>
<svg class="a" style="left:24px;top:399px" width="17" height="17" viewBox="0 0 17 17"><rect x="1" y="1" width="3.5" height="11" fill="#fff" stroke="#222" stroke-width="0.8"/><path d="M8 14L14 7L16 9L10 16Z" fill="#6a88f0" stroke="#223" stroke-width="0.7"/><path d="M6 3Q11 3 12 7" fill="none" stroke="#222" stroke-width="0.8"/><path d="M12.5 17L17 12.5V17Z" fill="#6e6e6e"/></svg>
<svg class="a" style="left:4px;top:420px" width="17" height="17" viewBox="0 0 17 17"><path d="M2 5L8 2L14 5V11L8 14L2 11Z" fill="#5a78e8" stroke="#223" stroke-width="0.9"/><path d="M2 5L8 8L14 5L8 2Z" fill="#b8c8ff"/><rect x="5" y="9" width="5" height="4" fill="#fff" stroke="#223" stroke-width="0.6"/><path d="M12.5 17L17 12.5V17Z" fill="#6e6e6e"/></svg>
<svg class="a" style="left:24px;top:420px" width="17" height="17" viewBox="0 0 17 17"><path d="M2 13L5 10H15L12 13Z" fill="#6a88f0" stroke="#223" stroke-width="0.7"/><path d="M6 10V3M9 10V3M12 10V3" stroke="#999" stroke-width="0.9"/><path d="M5 4L6 2L7 4M8 4L9 2L10 4M11 4L12 2L13 4" fill="none" stroke="#999" stroke-width="0.8"/><path d="M12.5 17L17 12.5V17Z" fill="#6e6e6e"/></svg>
<svg class="a" style="left:4px;top:441px" width="17" height="17" viewBox="0 0 17 17"><rect x="1" y="1" width="3.5" height="3.5" fill="#6a88f0" stroke="#223" stroke-width="0.6"/><rect x="1" y="6" width="3.5" height="3.5" fill="#6a88f0" stroke="#223" stroke-width="0.6"/><rect x="1" y="11" width="3.5" height="3.5" fill="#fff" stroke="#223" stroke-width="0.6"/><rect x="6" y="1" width="3.5" height="3.5" fill="#6a88f0" stroke="#223" stroke-width="0.6"/><rect x="6" y="6" width="3.5" height="3.5" fill="#6a88f0" stroke="#223" stroke-width="0.6"/><rect x="6" y="11" width="3.5" height="3.5" fill="#6a88f0" stroke="#223" stroke-width="0.6"/><rect x="11" y="1" width="3.5" height="3.5" fill="#6a88f0" stroke="#223" stroke-width="0.6"/><rect x="11" y="6" width="3.5" height="3.5" fill="#6a88f0" stroke="#223" stroke-width="0.6"/><rect x="11" y="11" width="3.5" height="3.5" fill="#6a88f0" stroke="#223" stroke-width="0.6"/><path d="M12.5 17L17 12.5V17Z" fill="#6e6e6e"/></svg>
<svg class="a" style="left:24px;top:441px" width="17" height="17" viewBox="0 0 17 17"><rect x="4" y="1" width="6" height="14" fill="#fff" stroke="#222" stroke-width="0.8"/><path d="M4 5H10M4 11H10" stroke="#222" stroke-width="0.8"/><path d="M7 0V16" stroke="#e02020" stroke-width="1.2" stroke-dasharray="1.5 1"/><path d="M12.5 17L17 12.5V17Z" fill="#6e6e6e"/></svg>
<svg class="a" style="left:4px;top:462px" width="17" height="17" viewBox="0 0 17 17"><path d="M2 3L7 2V13L2 14Z" fill="#fff" stroke="#222" stroke-width="0.8"/><path d="M7 2L12 1V12L7 13Z" fill="#5a78e8" stroke="#223" stroke-width="0.8"/><path d="M12.5 17L17 12.5V17Z" fill="#6e6e6e"/></svg>
<svg class="a" style="left:24px;top:462px" width="17" height="17" viewBox="0 0 17 17"><path d="M7 0V16" stroke="#3050d0" stroke-width="2"/><path d="M1 6L4 4L8 10L12 12L15 15" fill="none" stroke="#111" stroke-width="0.9"/><circle cx="2" cy="5" r="1" fill="#111"/><path d="M13 15H15.5V13" fill="none" stroke="#111" stroke-width="0.8"/><path d="M12.5 17L17 12.5V17Z" fill="#6e6e6e"/></svg>
<svg class="a" style="left:4px;top:483px" width="17" height="17" viewBox="0 0 17 17"><path d="M1 9L4 7L7 12L15 2L16 3L7 15Z" fill="#000"/><path d="M12.5 17L17 12.5V17Z" fill="#6e6e6e"/></svg>
<svg class="a" style="left:24px;top:483px" width="17" height="17" viewBox="0 0 17 17"><path d="M1 6L6 2L11 4L9 10L4 11Z" fill="#c8c8c8" stroke="#555" stroke-width="0.7"/><path d="M8 14L11 4L15 13Q12 16 8 14Z" fill="#a8a8a8" stroke="#555" stroke-width="0.7"/><path d="M12.5 17L17 12.5V17Z" fill="#6e6e6e"/></svg>
<svg class="a" style="left:4px;top:504px" width="17" height="17" viewBox="0 0 17 17"><path d="M8 5L15 11L8 15L1 11Z" fill="#e8c040" stroke="#443000" stroke-width="0.8"/><path d="M8 5V15M1 11L15 11" stroke="#aa8010" stroke-width="0.5"/><rect x="7" y="0" width="5" height="3" fill="#fff" stroke="#333" stroke-width="0.7"/><path d="M4 4L7 1.5" stroke="#333" stroke-width="0.7"/><path d="M12.5 17L17 12.5V17Z" fill="#6e6e6e"/></svg>

<svg class="a" style="left:58px;top:117px" width="1186" height="589" viewBox="58 117 1186 589">
<rect x="58" y="117" width="1186" height="589" fill="#9ca3ab"/>
<path d="M88.32 117V706M176.88 117V706M221.16 117V706M265.44 117V706M309.72 117V706M398.28 117V706M442.56 117V706M486.84000000000003 117V706M531.12 117V706M619.6800000000001 117V706M663.96 117V706M708.24 117V706M752.52 117V706M841.08 117V706M885.36 117V706M929.64 117V706M973.9200000000001 117V706M1062.48 117V706M1106.76 117V706M1151.04 117V706M1195.3200000000002 117V706M58 184.48000000000002H1244M58 228.76000000000002H1244M58 273.04H1244M58 317.32000000000005H1244M58 405.88H1244M58 450.16H1244M58 494.44000000000005H1244M58 538.72H1244M58 627.28H1244M58 671.5600000000001H1244" stroke="#979ca4" stroke-width="1" fill="none"/>
<path d="M132.6 117V706M354.0 117V706M575.4 117V706M796.8 117V706M1018.2 117V706M1239.6 117V706M58 140.20000000000002H1244M58 361.6H1244M58 583.0H1244" stroke="#84898f" stroke-width="1" fill="none"/>
<path d="M354 117V361" stroke="#47a04a" stroke-width="1.9"/>
<path d="M353.5 362H1244" stroke="#9d5656" stroke-width="1.8"/>
<path d="M454.3 211V407" stroke="#cc4fdc" stroke-width="1.4"/>
<path d="M520.1 186V466" stroke="#cc4fdc" stroke-width="1.4"/>
<path d="M586.7 172V506.5" stroke="#cc4fdc" stroke-width="1.4"/>
<path d="M653.2 159.4V549.1" stroke="#cc4fdc" stroke-width="1.4"/>
<path d="M686.2 153.5V597.4" stroke="#cc4fdc" stroke-width="1.4"/>
<path d="M436.7 273.1H717" stroke="#30dde4" stroke-width="1.3"/>
<path d="M436.4 317.35H717" stroke="#30dde4" stroke-width="1.3"/>
<path d="M440.9 361.5H717" stroke="#30dde4" stroke-width="1.3"/>
<path d="M456 405.85H717" stroke="#30dde4" stroke-width="1.3"/>
<path d="M498 450.1H717" stroke="#30dde4" stroke-width="1.3"/>
<path d="M566.5 494.35H713" stroke="#30dde4" stroke-width="1.3"/>
<path d="M638.6 538.6H713" stroke="#30dde4" stroke-width="1.3"/>
<path d="M679.5 582.85H713" stroke="#30dde4" stroke-width="1.3"/>
<path d="M697 627.1H712" stroke="#30dde4" stroke-width="1.3"/>
<path d="M437.5 267.7L717.2 217.3" stroke="#35d535" stroke-width="1.3"/>
<path d="M438.4 340.3L717 252.6" stroke="#35d535" stroke-width="1.3"/>
<path d="M456 406L717 277" stroke="#35d535" stroke-width="1.3"/>
<path d="M502.5 454.3L717 321" stroke="#35d535" stroke-width="1.3"/>
<path d="M579.4 502.3L717 366.3" stroke="#35d535" stroke-width="1.3"/>
<path d="M607.6 518.6L712.5 414.5" stroke="#35d535" stroke-width="1.3"/>
<path d="M645.3 544.2L712.5 461.5" stroke="#35d535" stroke-width="1.3"/>
<path d="M684.6 591.5L713.2 562.8" stroke="#35d535" stroke-width="1.3"/>
<path d="M440.4 223.5 C441.5 222.5 444.6 219.4 447.0 217.5 C449.4 215.6 451.8 214.0 455.0 212.0 C458.2 210.0 461.8 207.7 466.0 205.5 C470.2 203.3 474.5 201.1 480.0 199.0 C485.5 196.9 492.0 195.2 499.0 193.0 C506.0 190.8 513.7 188.2 522.0 186.0 C530.3 183.8 538.2 182.2 549.0 180.0 C559.8 177.8 575.2 174.8 587.0 172.5 C598.8 170.2 609.0 168.6 620.0 166.5 C631.0 164.4 642.0 162.1 653.0 160.0 C664.0 157.9 677.7 155.5 686.0 154.0 C694.3 152.5 697.8 151.9 703.0 151.0 C708.2 150.1 714.7 148.9 717.0 148.5" stroke="#30dde4" stroke-width="1.3" fill="none"/>
<path d="M440.8 223.0 C441.2 224.0 441.1 228.1 443.5 229.0 C445.9 229.9 450.6 228.9 455.0 228.3 C459.4 227.7 465.0 226.6 470.0 225.3 C475.0 224.0 480.0 222.2 485.0 220.3 C490.0 218.4 494.1 216.4 500.0 214.0 C505.9 211.6 513.5 208.8 520.6 206.0 C527.7 203.2 539.0 198.6 542.7 197.1" stroke="#30dde4" stroke-width="1.3" fill="none"/>
<path d="M546.6 153.5 C546.2 155.2 544.9 158.8 544.0 163.6 C543.1 168.3 541.7 176.4 541.5 182.0 C541.3 187.6 541.7 190.9 542.7 197.1 C543.7 203.3 545.5 212.8 547.4 219.0 C549.3 225.2 551.9 229.6 554.1 234.0 C556.3 238.4 556.3 239.0 560.8 245.5 C565.3 252.0 574.6 265.6 581.0 273.0 C587.4 280.4 590.0 282.4 599.3 289.8 C608.6 297.2 628.0 310.8 637.0 317.1 C646.0 323.4 646.2 322.7 653.0 327.5 C659.8 332.3 670.5 340.1 677.6 345.7 C684.7 351.3 690.8 356.1 695.7 361.1 C700.6 366.1 704.4 371.2 707.1 375.9 C709.8 380.6 710.9 387.1 711.7 389.3" stroke="#30dde4" stroke-width="1.3" fill="none"/>
<path d="M546.6 153.5 C552.2 152.3 567.7 148.7 580.0 146.5 C592.3 144.3 606.3 142.2 620.3 140.5 C634.3 138.8 650.6 137.3 663.9 136.4 C677.2 135.5 690.8 135.3 700.0 135.0 C709.2 134.7 716.0 134.6 719.2 134.5" stroke="#2e2e2e" stroke-width="1.0" fill="none"/>
<path d="M466.1 204.7 C466.2 208.9 466.2 220.4 466.6 230.0 C467.0 239.6 467.8 255.1 468.2 262.3 C468.6 269.5 467.8 263.9 469.1 273.0 C470.4 282.1 474.5 308.1 476.1 317.1 C477.7 326.1 476.6 319.9 478.6 327.2 C480.7 334.5 485.0 351.4 488.4 361.1 C491.8 370.8 495.3 377.8 499.1 385.2 C502.9 392.6 507.8 400.1 511.3 405.6 C514.8 411.1 516.6 413.4 520.2 418.4 C523.8 423.4 527.8 430.3 532.8 435.5 C537.8 440.7 544.0 444.4 549.9 449.4 C555.8 454.4 561.8 460.1 568.0 465.5 C574.2 470.9 581.3 477.2 587.0 482.0 C592.7 486.8 596.8 489.9 602.0 494.1 C607.2 498.3 610.1 500.4 618.5 507.3 C626.9 514.2 643.3 526.5 652.4 535.3 C661.5 544.1 667.6 552.6 673.2 560.0 C678.8 567.4 682.4 573.6 685.9 579.8 C689.4 586.0 691.5 590.5 694.0 597.0 C696.5 603.5 699.2 612.8 701.0 618.8 C702.8 624.8 704.0 628.6 705.0 633.0 C706.0 637.4 706.8 641.2 707.0 645.0 C707.2 648.8 706.6 651.2 706.0 656.0 C705.4 660.8 703.8 670.8 703.4 673.8" stroke="#2e2e2e" stroke-width="1.0" fill="none"/>
<path d="M499.1 193.0 C499.8 200.8 502.2 229.6 503.3 240.0 C504.4 250.4 504.9 249.9 505.8 255.4 C506.7 260.9 506.7 263.0 508.8 273.0 C510.9 283.0 516.7 306.6 518.6 315.5 C520.5 324.4 517.6 318.8 520.2 326.4 C522.8 334.0 531.5 354.4 534.3 361.1 C537.1 367.8 533.0 359.3 537.0 366.7 C541.0 374.1 553.7 397.5 558.3 405.6 C562.9 413.7 560.0 408.7 564.7 415.3 C569.5 421.9 578.9 436.4 586.8 445.5 C594.7 454.6 604.2 462.1 612.2 469.9 C620.2 477.6 628.0 485.0 634.8 492.0 C641.6 499.0 648.6 506.8 653.2 511.9 C657.8 517.0 658.7 518.0 662.4 522.4 C666.1 526.8 671.5 532.8 675.5 538.4 C679.5 544.0 682.5 549.3 686.2 556.0 C689.9 562.7 694.7 571.6 697.7 578.6 C700.7 585.6 702.0 590.8 704.0 598.0 C706.0 605.2 708.8 614.9 709.6 621.9 C710.4 628.9 709.4 634.3 709.0 640.0 C708.6 645.7 707.9 650.4 707.0 656.0 C706.1 661.6 704.0 670.8 703.4 673.8" stroke="#2e2e2e" stroke-width="1.0" fill="none"/>
<path d="M716.9 150V462C716.9 482 713.8 495 713.8 510V575" stroke="#5d5f63" stroke-width="2.2" fill="none"/>
<path d="M719.4 150V598.7" stroke="#2b2b2b" stroke-width="1.2"/>
<path d="M719.4 117V146.6M719.4 598.7V671.5" stroke="#e02a2a" stroke-width="1.3"/>
<path d="M712.6 382.6V641.3H719" stroke="#2222dd" stroke-width="1.3" fill="none"/>
<path d="M714 535.4H719M703.5 626H719" stroke="#2b2b2b" stroke-width="1"/>
<path d="M703.4 600V617" stroke="#2b2b2b" stroke-width="1.2"/>
<path d="M713.8 575C712 600 710 615 709.6 626" stroke="#4a4a4a" stroke-width="1" fill="none"/>
<g fill="#fff" fill-opacity="0.88" stroke="#cc4fdc" stroke-width="1.1"><circle cx="454.3" cy="211" r="2.15"/><circle cx="520" cy="187" r="2.15"/><circle cx="586.8" cy="172" r="2.15"/><circle cx="653" cy="159.4" r="2.15"/><circle cx="686.2" cy="153.5" r="2.15"/><circle cx="454.3" cy="228" r="2.15"/><circle cx="520.6" cy="206.4" r="2.15"/><circle cx="586.8" cy="278.9" r="2.15"/><circle cx="653" cy="327.5" r="2.15"/><circle cx="686.2" cy="352" r="2.15"/></g>
<g fill="#fff" fill-opacity="0.88" stroke="#333" stroke-width="1.1"><circle cx="466.1" cy="204.7" r="2.15"/><circle cx="468.2" cy="262.3" r="2.15"/><circle cx="469.1" cy="273" r="2.15"/><circle cx="476.1" cy="317.1" r="2.15"/><circle cx="478.6" cy="327.2" r="2.15"/><circle cx="488.4" cy="361.1" r="2.15"/><circle cx="499.1" cy="385.2" r="2.15"/><circle cx="511.3" cy="405.6" r="2.15"/><circle cx="520.2" cy="418.4" r="2.15"/><circle cx="532.8" cy="435.5" r="2.15"/><circle cx="549.9" cy="449.4" r="2.15"/><circle cx="587" cy="482" r="2.15"/><circle cx="593.7" cy="488" r="2.15"/><circle cx="602" cy="494.1" r="2.15"/><circle cx="618.5" cy="507.3" r="2.15"/><circle cx="652.4" cy="535.3" r="2.15"/><circle cx="655.4" cy="538.7" r="2.15"/><circle cx="685.9" cy="579.8" r="2.15"/><circle cx="689.3" cy="586.5" r="2.15"/><circle cx="703.4" cy="626.6" r="2.15"/><circle cx="706.5" cy="652.9" r="2.15"/><circle cx="499.1" cy="193" r="2.15"/><circle cx="505.8" cy="255.4" r="2.15"/><circle cx="508.8" cy="273" r="2.15"/><circle cx="518.6" cy="315.5" r="2.15"/><circle cx="520.2" cy="326.4" r="2.15"/><circle cx="534.3" cy="361.1" r="2.15"/><circle cx="537" cy="366.7" r="2.15"/><circle cx="558.3" cy="405.6" r="2.15"/><circle cx="564.7" cy="415.3" r="2.15"/><circle cx="586.8" cy="445.5" r="2.15"/><circle cx="612.2" cy="469.9" r="2.15"/><circle cx="634.8" cy="492" r="2.15"/><circle cx="637.6" cy="494.3" r="2.15"/><circle cx="653.2" cy="511.9" r="2.15"/><circle cx="662.4" cy="522.4" r="2.15"/><circle cx="675.5" cy="538.4" r="2.15"/><circle cx="686.2" cy="558" r="2.15"/><circle cx="686.2" cy="567.2" r="2.15"/><circle cx="697.7" cy="578.6" r="2.15"/><circle cx="697.7" cy="582.3" r="2.15"/><circle cx="709.6" cy="621.9" r="2.15"/><circle cx="719.4" cy="134.4" r="2.15"/><circle cx="703.5" cy="150.4" r="2.15"/><circle cx="581" cy="273" r="2.15"/><circle cx="719.3" cy="625.3" r="2.15"/><circle cx="708" cy="616" r="2.15"/></g>
<g fill="#fff" fill-opacity="0.88" stroke="#35d535" stroke-width="1.1"><circle cx="560.5" cy="245.9" r="2.15"/><circle cx="599.3" cy="289.8" r="2.15"/><circle cx="677.6" cy="345.7" r="2.15"/><circle cx="707.1" cy="375.9" r="2.15"/><circle cx="717.2" cy="217.3" r="2.15"/><circle cx="717" cy="252.6" r="2.15"/><circle cx="717" cy="276.9" r="2.15"/><circle cx="717" cy="321" r="2.15"/><circle cx="717" cy="366.1" r="2.15"/><circle cx="717" cy="410.3" r="2.15"/><circle cx="712.2" cy="414.5" r="2.15"/><circle cx="717" cy="455.8" r="2.15"/><circle cx="712.2" cy="461.5" r="2.15"/><circle cx="713.2" cy="562.8" r="2.15"/></g>
<g fill="#fff" fill-opacity="0.88" stroke="#30dde4" stroke-width="1.1"><circle cx="637" cy="317.1" r="2.15"/><circle cx="695.7" cy="361.1" r="2.15"/><circle cx="717" cy="273" r="2.15"/><circle cx="717" cy="317.1" r="2.15"/><circle cx="717" cy="361.1" r="2.15"/><circle cx="717" cy="405.3" r="2.15"/><circle cx="717" cy="449.7" r="2.15"/><circle cx="712.8" cy="405.5" r="2.15"/><circle cx="712.8" cy="449.8" r="2.15"/><circle cx="712.8" cy="494.4" r="2.15"/><circle cx="712.8" cy="538.4" r="2.15"/><circle cx="712.6" cy="582.5" r="2.15"/><circle cx="708.8" cy="626.9" r="2.15"/></g>
<g fill="#fff" fill-opacity="0.88" stroke="#e8403c" stroke-width="1.1"><circle cx="440.9" cy="221.5" r="2.15"/><circle cx="445.1" cy="219" r="2.15"/><circle cx="448.4" cy="216.9" r="2.15"/><circle cx="455.2" cy="211.4" r="2.15"/><circle cx="477.8" cy="198.5" r="2.15"/><circle cx="521.9" cy="185.1" r="2.15"/><circle cx="549.4" cy="179.5" r="2.15"/><circle cx="580.4" cy="173.7" r="2.15"/><circle cx="616.9" cy="167" r="2.15"/><circle cx="658.8" cy="160.3" r="2.15"/><circle cx="717.2" cy="148.3" r="2.15"/><circle cx="443.4" cy="230.2" r="2.15"/><circle cx="448.8" cy="228.2" r="2.15"/><circle cx="454.3" cy="228" r="2.15"/><circle cx="460.5" cy="227.3" r="2.15"/><circle cx="471.6" cy="226" r="2.15"/><circle cx="482" cy="224" r="2.15"/><circle cx="497.9" cy="219.8" r="2.15"/><circle cx="517.2" cy="213.6" r="2.15"/><circle cx="542.7" cy="197.1" r="2.15"/><circle cx="719.3" cy="640.8" r="2.15"/></g>
<g fill="#30dde4"><rect x="666.4" y="272.20" width="1.8" height="1.8"/><rect x="666.4" y="316.45" width="1.8" height="1.8"/><rect x="666.4" y="404.95" width="1.8" height="1.8"/><rect x="666.4" y="449.20" width="1.8" height="1.8"/><rect x="666.4" y="493.45" width="1.8" height="1.8"/><rect x="666.4" y="537.70" width="1.8" height="1.8"/><rect x="666.4" y="581.95" width="1.8" height="1.8"/><rect x="666.4" y="626.20" width="1.8" height="1.8"/></g><rect x="666.4" y="360.7" width="1.8" height="1.8" fill="#d02020"/>
<path d="M85.5 657V679.5H107" stroke="#50545a" stroke-width="1" fill="none"/>
<text x="86" y="657" font-size="9" fill="#50545a" font-family="Liberation Sans">z</text>
<text x="108" y="680" font-size="9" fill="#50545a" font-family="Liberation Sans">x</text>
<path d="M58 117.5H98.8V129Q98.8 131 96.8 131H58Z" fill="#68a0f8"/>
<text x="63" y="127.3" font-size="8.4" font-weight="bold" fill="#1c2130" font-family="Liberation Sans">Front</text>
<path d="M91 119V130" stroke="#3f5f98" stroke-width="1.2"/>
<path d="M92.2 123H97.2L94.7 126Z" fill="#1c1c24"/>
</svg>

<!-- right panel -->
<div class="a" style="left:1247px;top:116px;width:190px;height:606px;background:#e9eaee;border-radius:5px 5px 0 0"></div>
<div class="a" style="left:1421px;top:130px;width:16px;height:607px;background:#d9dadf"></div>
<div class="a" style="left:1421px;top:156px;width:16px;height:26px;background:#e9eaee;border-radius:0 4px 4px 0"></div>
<div class="a t g" style="left:1250px;top:117.4px">Properties: Viewport</div>
<svg class="a" style="left:1424px;top:118px" width="10" height="10" viewBox="0 0 10 10"><g fill="none" stroke="#c3c4c8" stroke-width="1.3"><circle cx="5" cy="5" r="2.6"/><path d="M5 0.5V2M5 8V9.5M0.5 5H2M8 5H9.5M1.8 1.8L2.9 2.9M7.1 7.1L8.2 8.2M1.8 8.2L2.9 7.1M7.1 2.9L8.2 1.8"/></g></svg>
<div class="a" style="left:1247px;top:130px;width:174px;height:1px;background:#e0e2e7"></div>
<div class="a" style="left:1251px;top:133px;width:21px;height:21px;background:#d2dcef"></div>
<svg class="a" style="left:1253px;top:137px" width="17" height="13" viewBox="0 0 17 13"><path d="M1 4Q1 3 2 3H4L5.5 1H10.5L12 3H15Q16 3 16 4V11Q16 12 15 12H2Q1 12 1 11Z" fill="#2a2a2a"/><path d="M1.5 4.5H15.5" stroke="#555" stroke-width="0.6"/><circle cx="9" cy="7.5" r="3.2" fill="#555" stroke="#111" stroke-width="0.8"/><circle cx="9" cy="7.5" r="1.6" fill="#2d6a3a"/></svg>
<svg class="a" style="left:1277px;top:136px" width="18" height="17" viewBox="0 0 18 17"><rect x="0.5" y="0.5" width="17" height="16" fill="#cfd0d3" stroke="#6b6b6b"/><rect x="1.5" y="1.5" width="15" height="14" fill="#58c8f4"/><rect x="3" y="3" width="12" height="11" fill="#fff" stroke="#e84848" stroke-width="1.1"/></svg>
<svg class="a" style="left:1302px;top:135px" width="17" height="18" viewBox="0 0 17 18"><defs><radialGradient id="sph" cx="35%" cy="35%" r="65%"><stop offset="0" stop-color="#dbe8ff"/><stop offset="0.45" stop-color="#3a6ad8"/><stop offset="1" stop-color="#0a1e6a"/></radialGradient></defs><circle cx="4.5" cy="13" r="4.2" fill="url(#sph)"/><circle cx="9.5" cy="7.5" r="3.4" fill="url(#sph)"/><circle cx="13.5" cy="3.5" r="2.6" fill="url(#sph)"/></svg>
<div class="a t" style="left:1250px;top:167.68px;font-size:10px;color:#333">Viewport</div>
<div class="a" style="left:1250px;top:180.5px;width:165px;height:1px;background:#dcdee3"></div>
<div class="a t" style="left:1262px;top:184.48px;">Title</div>
<div class="a" style="left:1340px;top:182px;width:75px;height:14px;background:#fff;"></div>
<div class="a t" style="left:1343.5px;top:184.48px;">Front</div>
<div class="a t" style="left:1262px;top:199.98px;">Width</div>
<div class="a" style="left:1340px;top:198px;width:75px;height:14px;background:#fff;"></div>
<div class="a t" style="left:1343.5px;top:199.98px;">1584</div>
<div class="a" style="left:1405px;top:198px;width:1px;height:14px;background:#e4e5e8"></div>
<svg class="a" style="left:1407px;top:198px" width="7" height="14"><path d="M1 5.5L3.5 2.5L6 5.5ZM1 8.5L3.5 11.5L6 8.5Z" fill="#222"/></svg>
<div class="a t" style="left:1262px;top:215.08px;">Height</div>
<div class="a" style="left:1340px;top:214px;width:75px;height:12px;background:#fff;"></div>
<div class="a t" style="left:1343.5px;top:215.08px;">785</div>
<div class="a" style="left:1405px;top:214px;width:1px;height:12px;background:#e4e5e8"></div>
<svg class="a" style="left:1407px;top:214px" width="7" height="12"><path d="M1 4.5L3.5 1.5L6 4.5ZM1 7.5L3.5 10.5L6 7.5Z" fill="#222"/></svg>
<div class="a t" style="left:1262px;top:230.58px;">Projection</div>
<div class="a" style="left:1340px;top:229px;width:75px;height:14px;background:#fff;"></div>
<div class="a t" style="left:1343.5px;top:230.58px;">Parallel</div>
<svg class="a" style="left:1405px;top:233.0px" width="7" height="5"><path d="M1 1L3.5 3.5L6 1" fill="none" stroke="#333" stroke-width="1"/></svg>
<div class="a t" style="left:1262px;top:247.38px;">Display mode</div>
<div class="a" style="left:1340px;top:245px;width:75px;height:14px;background:#fff;"></div>
<div class="a t" style="left:1343.5px;top:247.38px;">Wireframe</div>
<svg class="a" style="left:1405px;top:249.1px" width="7" height="5"><path d="M1 1L3.5 3.5L6 1" fill="none" stroke="#333" stroke-width="1"/></svg>
<div class="a" style="left:1262px;top:197px;width:153px;height:1px;background:#dcdee3"></div>
<div class="a" style="left:1262px;top:212px;width:153px;height:1px;background:#dcdee3"></div>
<div class="a" style="left:1262px;top:227px;width:153px;height:1px;background:#dcdee3"></div>
<div class="a" style="left:1262px;top:244px;width:153px;height:1px;background:#dcdee3"></div>
<div class="a" style="left:1262px;top:260px;width:153px;height:1px;background:#dcdee3"></div>
<div class="a" style="left:1262px;top:276px;width:153px;height:1px;background:#dcdee3"></div>
<div class="a t" style="left:1262px;top:263.28px;">Locked</div>
<div class="a" style="left:1341px;top:263px;width:11px;height:11px;background:#fff;border:1px solid #d0d2d8"></div>
<div class="a t" style="left:1250px;top:279.58px;font-size:10px;color:#333">Camera</div>
<div class="a" style="left:1250px;top:292px;width:165px;height:1px;background:#dcdee3"></div>
<div class="a t" style="left:1262px;top:296.38px;">Lens Length (mm)</div>
<div class="a" style="left:1340px;top:294px;width:75px;height:14px;background:#f4f4f6;"></div>
<div class="a t" style="left:1343.5px;top:296.38px;color:#a8a8a8">7270.1</div>
<svg class="a" style="left:1407px;top:294px" width="7" height="14"><path d="M1 5L3.5 2L6 5ZM1 8.5L3.5 11.5L6 8.5Z" fill="#b8b8b8"/></svg>
<div class="a" style="left:1262px;top:309px;width:153px;height:1px;background:#dcdee3"></div>
<div class="a t" style="left:1262px;top:311.08px;">Rotation</div>
<div class="a" style="left:1340px;top:309px;width:75px;height:14px;background:#fff;"></div>
<div class="a t" style="left:1343.5px;top:311.08px;">0.0</div>
<div class="a" style="left:1405px;top:309px;width:1px;height:14px;background:#e4e5e8"></div>
<svg class="a" style="left:1407px;top:309px" width="7" height="14"><path d="M1 5.5L3.5 2.5L6 5.5ZM1 8.5L3.5 11.5L6 8.5Z" fill="#222"/></svg>
<div class="a" style="left:1262px;top:324px;width:153px;height:1px;background:#dcdee3"></div>
<div class="a t" style="left:1262px;top:325.78px;">X Location</div>
<div class="a" style="left:1340px;top:324px;width:75px;height:13px;background:#fff;"></div>
<div class="a t" style="left:1343.5px;top:325.78px;">6.702</div>
<div class="a" style="left:1405px;top:324px;width:1px;height:13px;background:#e4e5e8"></div>
<svg class="a" style="left:1407px;top:324px" width="7" height="13"><path d="M1 5.0L3.5 2.0L6 5.0ZM1 8.0L3.5 11.0L6 8.0Z" fill="#222"/></svg>
<div class="a" style="left:1262px;top:338px;width:153px;height:1px;background:#dcdee3"></div>
<div class="a t" style="left:1262px;top:340.98px;">Y Location</div>
<div class="a" style="left:1340px;top:339px;width:75px;height:14px;background:#fff;"></div>
<div class="a t" style="left:1343.5px;top:340.98px;">-4019.032</div>
<div class="a" style="left:1405px;top:339px;width:1px;height:14px;background:#e4e5e8"></div>
<svg class="a" style="left:1407px;top:339px" width="7" height="14"><path d="M1 5.5L3.5 2.5L6 5.5ZM1 8.5L3.5 11.5L6 8.5Z" fill="#222"/></svg>
<div class="a" style="left:1262px;top:354px;width:153px;height:1px;background:#dcdee3"></div>
<div class="a t" style="left:1262px;top:355.68px;">Z Location</div>
<div class="a" style="left:1340px;top:354px;width:75px;height:13px;background:#fff;"></div>
<div class="a t" style="left:1343.5px;top:355.68px;">-1.133</div>
<div class="a" style="left:1405px;top:354px;width:1px;height:13px;background:#e4e5e8"></div>
<svg class="a" style="left:1407px;top:354px" width="7" height="13"><path d="M1 5.0L3.5 2.0L6 5.0ZM1 8.0L3.5 11.0L6 8.0Z" fill="#222"/></svg>
<div class="a" style="left:1262px;top:368px;width:153px;height:1px;background:#dcdee3"></div>
<div class="a t" style="left:1262px;top:370.68px;">Distance to Target</div>
<div class="a" style="left:1340px;top:369px;width:75px;height:13px;background:#fff;"></div>
<div class="a t" style="left:1343.5px;top:370.68px;">4019.032</div>
<div class="a" style="left:1262px;top:383px;width:153px;height:1px;background:#dcdee3"></div>
<div class="a t" style="left:1262px;top:387.78px;">Location</div>
<div class="a" style="left:1340px;top:385px;width:75px;height:15px;background:#e4e6ec;border:1px solid #c6cad4;border-radius:2px"></div>
<div class="a t" style="left:1340px;width:75px;text-align:center;top:387.78px">Place...</div>
<div class="a" style="left:1262px;top:403px;width:153px;height:1px;background:#dcdee3"></div>
<div class="a t" style="left:1250px;top:406.68px;font-size:10px;color:#333">Target</div>
<div class="a" style="left:1250px;top:419px;width:165px;height:1px;background:#dcdee3"></div>
<div class="a t" style="left:1262px;top:422.58px;">X Target</div>
<div class="a" style="left:1340px;top:421px;width:75px;height:13px;background:#fff;"></div>
<div class="a t" style="left:1343.5px;top:422.58px;">6.702</div>
<div class="a" style="left:1405px;top:421px;width:1px;height:13px;background:#e4e5e8"></div>
<svg class="a" style="left:1407px;top:421px" width="7" height="13"><path d="M1 5.0L3.5 2.0L6 5.0ZM1 8.0L3.5 11.0L6 8.0Z" fill="#222"/></svg>
<div class="a" style="left:1262px;top:435px;width:153px;height:1px;background:#dcdee3"></div>
<div class="a t" style="left:1262px;top:437.28px;">Y Target</div>
<div class="a" style="left:1340px;top:435px;width:75px;height:14px;background:#fff;"></div>
<div class="a t" style="left:1343.5px;top:437.28px;">0.000</div>
<div class="a" style="left:1405px;top:435px;width:1px;height:14px;background:#e4e5e8"></div>
<svg class="a" style="left:1407px;top:435px" width="7" height="14"><path d="M1 5.5L3.5 2.5L6 5.5ZM1 8.5L3.5 11.5L6 8.5Z" fill="#222"/></svg>
<div class="a" style="left:1262px;top:450px;width:153px;height:1px;background:#dcdee3"></div>
<div class="a t" style="left:1262px;top:452.48px;">Z Target</div>
<div class="a" style="left:1340px;top:451px;width:75px;height:13px;background:#fff;"></div>
<div class="a t" style="left:1343.5px;top:452.48px;">-1.133</div>
<div class="a" style="left:1405px;top:451px;width:1px;height:13px;background:#e4e5e8"></div>
<svg class="a" style="left:1407px;top:451px" width="7" height="13"><path d="M1 5.0L3.5 2.0L6 5.0ZM1 8.0L3.5 11.0L6 8.0Z" fill="#222"/></svg>
<div class="a" style="left:1262px;top:465px;width:153px;height:1px;background:#dcdee3"></div>
<div class="a t" style="left:1262px;top:469.28px;">Location</div>
<div class="a" style="left:1340px;top:466px;width:75px;height:16px;background:#e4e6ec;border:1px solid #c6cad4;border-radius:2px"></div>
<div class="a t" style="left:1340px;width:75px;text-align:center;top:469.28px">Place...</div>
<div class="a" style="left:1262px;top:485px;width:153px;height:1px;background:#dcdee3"></div>
<div class="a t" style="left:1250px;top:488.08px;font-size:10px;color:#333">Wallpaper</div>
<div class="a" style="left:1250px;top:500px;width:165px;height:1px;background:#dcdee3"></div>
<div class="a t" style="left:1262px;top:506.28px;">Filename</div>
<div class="a" style="left:1340px;top:503px;width:57px;height:15px;background:#fff;"></div>
<div class="a t" style="left:1343.5px;top:506.28px;color:#444">(none)</div>
<div class="a" style="left:1398px;top:503px;width:17px;height:15px;background:#e4e6ec;border:1px solid #c6cad4;border-radius:2px"></div>
<div class="a t" style="left:1403px;top:505.28px;font-size:8px">...</div>
<div class="a" style="left:1262px;top:520px;width:153px;height:1px;background:#dcdee3"></div>
<div class="a t" style="left:1262px;top:523.38px;">Show</div>
<div class="a" style="left:1341px;top:523px;width:11px;height:11px;background:#fff;border:1px solid #d0d2d8"></div>
<svg class="a" style="left:1342px;top:524px" width="9" height="9"><path d="M1.5 4.8L3.6 7.2L7.8 1.5" fill="none" stroke="#111" stroke-width="1.5"/></svg>
<div class="a" style="left:1262px;top:535px;width:153px;height:1px;background:#dcdee3"></div>
<div class="a t" style="left:1262px;top:538.48px;">Gray</div>
<div class="a" style="left:1341px;top:538px;width:11px;height:11px;background:#fff;border:1px solid #d0d2d8"></div>
<svg class="a" style="left:1342px;top:539px" width="9" height="9"><path d="M1.5 4.8L3.6 7.2L7.8 1.5" fill="none" stroke="#111" stroke-width="1.5"/></svg>
<div class="a" style="left:1262px;top:550px;width:153px;height:1px;background:#dcdee3"></div>
<svg class="a" style="left:1422px;top:138px" width="14" height="13" viewBox="0 0 14 13"><path d="M1 5L8 2L13 5L13 8L6 11L1 8Z" fill="#2a4aa8"/><path d="M1 5L8 2L13 5L6 8Z" fill="#f05a28"/><path d="M1 5L6 8L13 5L13 6.5L6 9.5L1 6.5Z" fill="#fff"/></svg>
<svg class="a" style="left:1423px;top:164px" width="12" height="12" viewBox="0 0 12 12"><path d="M6.00 1.60A4.4 4.4 0 0 1 9.26 3.05" stroke="#ff2a2a" stroke-width="2.8" fill="none"/><path d="M9.11 2.89A4.4 4.4 0 0 1 10.39 6.22" stroke="#ffb020" stroke-width="2.8" fill="none"/><path d="M10.40 6.00A4.4 4.4 0 0 1 8.95 9.26" stroke="#e8e820" stroke-width="2.8" fill="none"/><path d="M9.11 9.11A4.4 4.4 0 0 1 5.78 10.39" stroke="#30d040" stroke-width="2.8" fill="none"/><path d="M6.00 10.40A4.4 4.4 0 0 1 2.74 8.95" stroke="#20c0e0" stroke-width="2.8" fill="none"/><path d="M2.89 9.11A4.4 4.4 0 0 1 1.61 5.78" stroke="#3050ff" stroke-width="2.8" fill="none"/><path d="M1.60 6.00A4.4 4.4 0 0 1 3.05 2.74" stroke="#c030d0" stroke-width="2.8" fill="none"/><path d="M2.89 2.89A4.4 4.4 0 0 1 6.22 1.61" stroke="#ff2a80" stroke-width="2.8" fill="none"/><circle cx="6" cy="6" r="5.9" fill="none" stroke="#333" stroke-width="0.4"/></svg>
<svg class="a" style="left:1422px;top:191px" width="14" height="13" viewBox="0 0 14 13"><rect x="1" y="1" width="12" height="9" fill="#9a9a9a" stroke="#222" stroke-width="1.2"/><rect x="2" y="2" width="10" height="4" fill="#d8d8d8"/><path d="M5 11H9V12.5H5Z" fill="#222"/></svg>
<svg class="a" style="left:1422px;top:218px" width="14" height="13" viewBox="0 0 14 13"><rect x="0.5" y="0.5" width="13" height="12" fill="#3a5ad0" stroke="#555" stroke-width="1"/><path d="M4 5Q4 2.5 7 2.5Q10 2.5 10 5Q10 6.5 7.5 7V8.5" fill="none" stroke="#fff" stroke-width="1.5"/><rect x="6.6" y="9.5" width="1.6" height="1.6" fill="#fff"/></svg>

<!-- bottom tabs -->
<div class="a" style="left:58px;top:706px;width:1189px;height:16px;background:#d9dadf"></div>
<div class="a" style="left:142px;top:707.5px;width:31px;height:13.5px;background:#e9eaee;border-radius:0 0 3px 3px;border:1px solid #d4dae6;border-top:none"></div>
<div class="a t g" style="left:0;top:710px">
<span class="a" style="left:64.5px">Perspective</span><span class="a" style="left:120.3px">Top</span><span class="a" style="left:146.7px;color:#2a2a2a">Front</span><span class="a" style="left:178.8px">Right</span>
</div>
<svg class="a" style="left:211px;top:711px" width="7" height="7" viewBox="0 0 7 7"><path d="M2.3 0.5H4.7V2.3H6.5V4.7H4.7V6.5H2.3V4.7H0.5V2.3H2.3Z" fill="#fff" stroke="#666" stroke-width="0.8"/></svg>

<div class="a" style="left:0;top:722px;width:1437px;height:15px;background:#d9dadf"></div>
<div class="a" style="left:1px;top:723px;width:14px;height:33px;background:#e9eaee;border-radius:4px 0 0 4px"></div>
<div class="a" style="left:15px;top:723px;width:41px;height:14px;background:#e9eaee;border-radius:4px 4px 0 0"></div>
<div class="a" style="left:15px;top:724px;width:1px;height:31px;background:#dcdde2"></div>
<div class="a t g" style="left:-8px;top:736.5px;transform:rotate(-90deg);transform-origin:50% 50%;width:30px;text-align:center">Osnap</div>
<div class="a t" style="left:23.8px;top:726.6px;color:#2a2a2a">Osnap</div>
<div class="a t g" style="left:63.8px;top:726.6px">Selection Filters</div>
<svg class="a" style="left:1424px;top:725px" width="10" height="10" viewBox="0 0 10 10"><g fill="none" stroke="#c3c4c8" stroke-width="1.3"><circle cx="5" cy="5" r="2.6"/><path d="M5 0.5V2M5 8V9.5M0.5 5H2M8 5H9.5M1.8 1.8L2.9 2.9M7.1 7.1L8.2 8.2M1.8 8.2L2.9 7.1M7.1 2.9L8.2 1.8"/></g></svg>
<div class="a" style="left:18px;top:741px;width:11px;height:11px;background:#fff;border:1px solid #d0d2d8"></div>
<div class="a t" style="left:32.5px;top:741.68px;color:#2a2a2a">End</div>
<div class="a" style="left:54px;top:741px;width:11px;height:11px;background:#fff;border:1px solid #d0d2d8"></div>
<div class="a t" style="left:68.3px;top:741.68px;color:#2a2a2a">Near</div>
<div class="a" style="left:93px;top:741px;width:11px;height:11px;background:#fff;border:1px solid #d0d2d8"></div>
<svg class="a" style="left:94px;top:742px" width="9" height="9"><path d="M1.5 4.8L3.6 7.2L7.8 1.5" fill="none" stroke="#111" stroke-width="1.5"/></svg>
<div class="a t" style="left:108px;top:741.68px;color:#2a2a2a">Point</div>
<div class="a" style="left:135px;top:741px;width:11px;height:11px;background:#fff;border:1px solid #d0d2d8"></div>
<div class="a t" style="left:149.7px;top:741.68px;color:#2a2a2a">Mid</div>
<div class="a" style="left:172px;top:741px;width:11px;height:11px;background:#fff;border:1px solid #d0d2d8"></div>
<div class="a t" style="left:186.7px;top:741.68px;color:#2a2a2a">Cen</div>
<div class="a" style="left:209px;top:741px;width:11px;height:11px;background:#fff;border:1px solid #d0d2d8"></div>
<div class="a t" style="left:223.3px;top:741.68px;color:#2a2a2a">Int</div>
<div class="a" style="left:240px;top:741px;width:11px;height:11px;background:#fff;border:1px solid #d0d2d8"></div>
<div class="a t" style="left:254.5px;top:741.68px;color:#2a2a2a">Perp</div>
<div class="a" style="left:280px;top:741px;width:11px;height:11px;background:#fff;border:1px solid #d0d2d8"></div>
<div class="a t" style="left:293.75px;top:741.68px;color:#2a2a2a">Tan</div>
<div class="a" style="left:314px;top:741px;width:11px;height:11px;background:#fff;border:1px solid #d0d2d8"></div>
<div class="a t" style="left:328.75px;top:741.68px;color:#2a2a2a">Quad</div>
<div class="a" style="left:358px;top:741px;width:11px;height:11px;background:#fff;border:1px solid #d0d2d8"></div>
<div class="a t" style="left:371.5px;top:741.68px;color:#2a2a2a">Knot</div>
<div class="a" style="left:397px;top:741px;width:11px;height:11px;background:#fff;border:1px solid #d0d2d8"></div>
<div class="a t" style="left:410.8px;top:741.68px;color:#2a2a2a">Vertex</div>
<div class="a" style="left:442px;top:741px;width:11px;height:11px;background:#fff;border:1px solid #d0d2d8"></div>
<div class="a t" style="left:455.5px;top:741.68px;color:#2a2a2a">Project</div>
<div class="a" style="left:496px;top:741px;width:11px;height:11px;background:#fff;border:1px solid #d0d2d8"></div>
<div class="a t" style="left:510px;top:741.68px;color:#2a2a2a">Disable</div>
<div class="a" style="left:5px;top:759px;width:11px;height:11px;border:2px solid #3a3a3a;border-left-width:3px;background:#fff"></div>
<div class="a t" style="left:30.8px;top:759.68px;color:#3a3a3a">CPlane</div>
<div class="a t" style="left:90.8px;top:759.68px;color:#3a3a3a">x 7.226</div>
<div class="a t" style="left:152.5px;top:759.68px;color:#3a3a3a">y -1.175</div>
<div class="a t" style="left:227px;top:759.68px;color:#3a3a3a">z 0</div>
<div class="a t" style="left:293.25px;top:759.68px;color:#3a3a3a">Feet</div>
<div class="a t" style="left:359px;top:759.68px;color:#3a3a3a">Default</div>
<div class="a t" style="left:490.7px;top:759.68px;color:#3a3a3a">Grid Snap</div>
<div class="a t" style="left:583.4px;top:759.68px;color:#3a3a3a">Planar</div>
<div class="a t" style="left:665.6px;top:759.68px;color:#3a3a3a">SmartTrack</div>
<div class="a t" style="left:727.2px;top:759.68px;color:#3a3a3a">Gumball (CPlane)</div>
<div class="a t" style="left:825.4px;top:759.68px;color:#3a3a3a">Auto CPlane (Object)</div>
<div class="a t" style="left:927.2px;top:759.68px;color:#3a3a3a">Record History</div>
<div class="a t" style="left:1002.4px;top:759.68px;color:#3a3a3a">Filter</div>
<div class="a t" style="left:1038.8px;top:759.68px;color:#3a3a3a">Available physical memory: 22900 MB</div>
<div class="a" style="left:342px;top:758px;width:12px;height:12px;background:#000"></div>
<div class="a" style="left:538px;top:757px;width:36px;height:14px;background:#d3dbee;border-radius:2px"></div>
<div class="a t" style="left:544px;top:759.68px;font-weight:bold;color:#2a2a2a">Ortho</div>
<div class="a" style="left:617px;top:757px;width:38px;height:14px;background:#d3dbee;border-radius:2px"></div>
<div class="a t" style="left:622.8px;top:759.68px;font-weight:bold;color:#2a2a2a">Osnap</div>
<svg class="a" style="left:811px;top:758px" width="8" height="11" viewBox="0 0 8 11"><path d="M2 5V3Q2 1 4 1Q6 1 6 3V5" fill="none" stroke="#999" stroke-width="1"/><rect x="0.5" y="5" width="7" height="5.5" fill="none" stroke="#999" stroke-width="1"/></svg>
<div class="a" style="left:1422px;top:759px;width:11px;height:11px;border:2px solid #3a3a3a;border-right-width:3px;background:#fff"></div>
</body></html>
